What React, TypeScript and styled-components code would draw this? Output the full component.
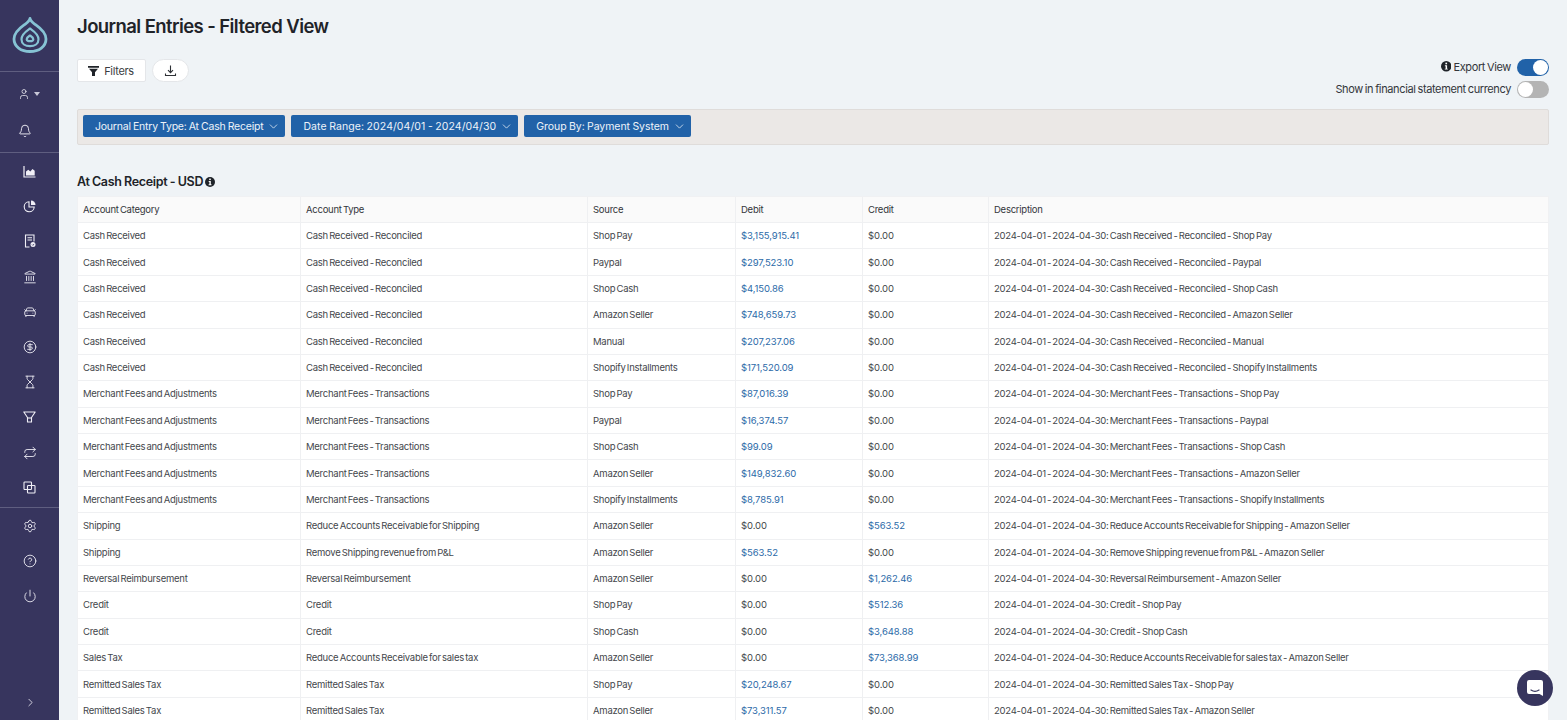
import React from "react";
import styled, { createGlobalStyle } from "styled-components";
import { Bell, Landmark, CarFront, CircleDollarSign, Hourglass, Repeat, Settings, CircleHelp, Power, ChevronRight, ChevronDown, User } from "lucide-react";

const Global = createGlobalStyle`
  html, body { margin: 0; padding: 0; height: 720px; overflow: hidden; background: #eff3f6; }
  body { font-family: Inter, "Liberation Sans", sans-serif; color: #26282c; }
  * { box-sizing: border-box; }
`;
const Page = styled.div`display: flex; width: 1567px; height: 720px; overflow: hidden;`;
const Side = styled.nav`width: 59px; flex: none; height: 720px; background: #37355e; color: #f0eff6; display: flex; flex-direction: column; align-items: center;`;
const LogoBox = styled.div`width: 100%; height: 72px; flex: none; display: flex; align-items: center; justify-content: center; border-bottom: 1px solid #5f5e80; padding-bottom: 1px;`;
const Group = styled.div<{ $h: number; $pt: number; $gap: number; $last?: boolean }>`
  width: 100%; height: ${p => p.$h}px; flex: none; padding-top: ${p => p.$pt}px; display: flex; flex-direction: column; align-items: center; gap: ${p => p.$gap}px;
  border-bottom: ${p => p.$last ? "0" : "1px solid #5f5e80"};
`;
const Ico = styled.span`width: 14px; height: 14px; display: flex; align-items: center; justify-content: center; flex: none;`;
const BellIco = styled(Ico)`margin-left: -10px;`;
const UserRow = styled.span`display: flex; align-items: center; gap: 4px; height: 14px; margin-right: 1px;`;
const Caret = styled.i`width: 0; height: 0; border-left: 3.500px solid transparent; border-right: 3.500px solid transparent; border-top: 4px solid #c9c8d8;`;
const Spacer = styled.div`flex: 1;`;
const Expand = styled.div`height: 27px; flex: none; color: #e5e4ee; margin-left: 1px;`;
const Main = styled.main`flex: 1; min-width: 0; padding: 13px 18px 0 18px;`;
const Title = styled.h1`margin: 0; font-size: 18.5px; line-height: 26px; font-weight: 600; letter-spacing: -0.58px; color: #1f2329;`;
const TopRow = styled.div`display: flex; justify-content: space-between; margin-top: 20px; height: 50px;`;
const BtnRow = styled.div`display: flex; gap: 6px; align-items: flex-start;`;
const FilterBtn = styled.button`width: 69px; height: 23px; border: 1px solid #e4e6e9; border-radius: 2px; background: #fff; display: flex; align-items: center; justify-content: center; gap: 5px; padding: 0 1px 0 0; font: 400 11px Inter, sans-serif; letter-spacing: -0.3px; color: #3a3d42;`;
const RoundBtn = styled.button`width: 37px; height: 23px; border: 1px solid #e4e6e9; border-radius: 12px; background: #fff; display: flex; align-items: center; justify-content: center; padding: 0; color: #2d3035;`;
const Toggles = styled.div`display: flex; flex-direction: column; align-items: flex-end; gap: 5px;`;
const ToggleRow = styled.div`display: flex; align-items: center; gap: 6px; height: 17px; font-size: 11px; letter-spacing: -0.37px; word-spacing: -0.8px; color: #33363b;`;
const ToggleLabel = styled.span`display: flex; align-items: center; gap: 2px; margin-bottom: 2px;`;
const Track = styled.span<{ $on?: boolean }>`width: 32px; height: 17px; border-radius: 9px; background: ${p => p.$on ? "#2162a8" : "#b4b4b4"}; display: flex; align-items: center; justify-content: ${p => p.$on ? "flex-end" : "flex-start"}; padding: 0 1px;`;
const Knob = styled.span`width: 15px; height: 15px; border-radius: 50%; background: #fff;`;
const FilterBar = styled.div`height: 36px; background: #ebe8e6; border: 1px solid #dfdcda; border-radius: 2px; display: flex; align-items: center; gap: 6px; padding: 0 5px 2px;`;
const Pill = styled.div<{ $track: number }>`height: 22px; background: #2162a8; border-radius: 2px; color: #eef3f9; display: flex; align-items: center; gap: 4px; padding: 0 5px 0 12px; font-size: 10.5px; letter-spacing: ${p => p.$track}px; word-spacing: -0.5px;`;
const Section = styled.h2`display: flex; align-items: center; gap: 2px; margin: 28px 0 5px; font-size: 12.5px; line-height: 18px; font-weight: 600; letter-spacing: -0.3px; word-spacing: -0.5px; color: #202328;`;
const Table = styled.div`background: #fff; border: 1px solid #f0f1f3; border-bottom: 0; font-size: 9.5px; letter-spacing: -0.25px; word-spacing: -1.2px; color: #44474c;`;
const Row = styled.div<{ $head?: boolean }>`
  display: grid; grid-template-columns: 222px 287px 148px 127px 126px 1fr; height: ${p => p.$head ? "26px" : "26.39px"};
  background: ${p => p.$head ? "#fafafa" : "#fff"}; border-bottom: 1px solid #eff0f2;
  ${p => p.$head ? "color: #33363b;" : ""}
`;
const Cell = styled.div`display: flex; align-items: center; padding-left: 5px; border-left: 1px solid #eff0f2; white-space: nowrap; &:first-child { border-left: 0; }`;
const Amount = styled.span<{ $blue?: boolean }>`letter-spacing: -0.1px; ${p => p.$blue ? "color: #2c6aa8;" : ""}`;
const Chat = styled.div`position: fixed; left: 1517px; top: 670px; width: 36px; height: 36px; border-radius: 50%; background: #37355e; display: flex; align-items: center; justify-content: center;`;

const Logo = () => (
  <svg width="36" height="36" viewBox="0 0 36 36" fill="none" stroke="#86c3d4" strokeLinejoin="round">
    <path d="M18 1.500c.4 2.600 2 3.700 5.500 6.200 5 3.500 10.500 7.800 10.500 14.300 0 7.500-7 12.500-16 12.500S2 29.500 2 22c0-6.500 5.500-10.800 10.500-14.300 3.500-2.500 5.100-3.600 5.500-6.200z" strokeWidth="2.800" />
    <path d="M18 11.500c3.200 2.300 8.500 5.300 8.500 10.700 0 4.500-3.800 7-8.500 7s-8.500-2.500-8.500-7c0-5.400 5.300-8.400 8.500-10.700z" strokeWidth="2.200" />
    <path d="M18 18.500c1.500 1 3.300 2 3.300 3.700 0 1.400-1.500 2-3.300 2s-3.300-.6-3.300-2c0-1.700 1.800-2.700 3.300-3.700z" strokeWidth="2.200" />
  </svg>
);
const ChartIcon = () => (
  <svg width="13" height="13" viewBox="0 0 13 13"><path d="M1 1v11h11.500" fill="none" stroke="currentColor" strokeWidth="1.200" /><path d="M3 10.500V6.500l2.300-1.800 2 1.800 2.200-2.500 2.200 1.700v4.800z" fill="currentColor" /></svg>
);
const PieIcon = () => (
  <svg width="14" height="14" viewBox="0 0 14 14" fill="none" stroke="currentColor" strokeWidth="1.100"><path d="M6 2.800a5 5 0 1 0 5.200 5.200H6z" /><path d="M8 1.500a4.500 4.500 0 0 1 4.500 4.500H8z" fill="currentColor" stroke="none" /></svg>
);
const DocIcon = () => (
  <svg width="14" height="14" viewBox="0 0 14 14" fill="none" stroke="currentColor" strokeWidth="1.100"><path d="M6.500 13H2.500V1h8.500v6.500" /><path d="M4.500 3.700h4.500M4.500 6h4.500" /><circle cx="10" cy="10.500" r="2.500" fill="currentColor" stroke="none" /><path d="M9 10.500l.9.900 1.200-1.500" stroke="#37355e" strokeWidth=".8" /></svg>
);
const FunnelIcon = () => (
  <svg width="13" height="12" viewBox="0 0 13 12" fill="none" stroke="currentColor" strokeWidth="1.100" strokeLinejoin="round"><path d="M.8 1h11.400L8.500 6.500v4.500h-4V6.500z" /><path d="M4.500 7h4" /></svg>
);
const StackIcon = () => (
  <svg width="13" height="13" viewBox="0 0 13 13" fill="none" stroke="currentColor" strokeWidth="1.100"><rect x="1" y="1" width="7.500" height="7.500" rx=".8" /><rect x="4.500" y="4.500" width="7.500" height="7.500" rx=".8" /></svg>
);
const FunnelSolid = () => (
  <svg width="11" height="10" viewBox="0 0 11 10"><path d="M0 0h11v1.800H0zM1 2.800h9L7 6.200V10H4V6.200z" fill="#1f2329" /></svg>
);
const TrayIcon = () => (
  <svg width="13" height="13" viewBox="0 0 13 13" fill="none" stroke="currentColor" strokeWidth="1.100"><path d="M6.500 1.500v7M4 6.200l2.500 2.500L9 6.200" /><path d="M1.500 9.500v2h10v-2" /></svg>
);
const InfoDot = ({ size = 10 }: { size?: number }) => (
  <svg width={size} height={size} viewBox="0 0 10 10"><circle cx="5" cy="5" r="5" fill="#1f2329" /><rect x="4.200" y="1.600" width="1.600" height="1.500" fill="#fff" /><path d="M3.700 4h2.100v3.300h.7v.9H3.600v-.9h.8V4.900h-.7z" fill="#fff" /></svg>
);

type R = [string, string, string, string, string];
const CR = "Cash Received", CRR = "Cash Received - Reconciled", MF = "Merchant Fees and Adjustments", MT = "Merchant Fees - Transactions";
const rows: R[] = [
  [CR, CRR, "Shop Pay", "$3,155,915.41", "$0.00"],
  [CR, CRR, "Paypal", "$297,523.10", "$0.00"],
  [CR, CRR, "Shop Cash", "$4,150.86", "$0.00"],
  [CR, CRR, "Amazon Seller", "$748,659.73", "$0.00"],
  [CR, CRR, "Manual", "$207,237.06", "$0.00"],
  [CR, CRR, "Shopify Installments", "$171,520.09", "$0.00"],
  [MF, MT, "Shop Pay", "$87,016.39", "$0.00"],
  [MF, MT, "Paypal", "$16,374.57", "$0.00"],
  [MF, MT, "Shop Cash", "$99.09", "$0.00"],
  [MF, MT, "Amazon Seller", "$149,832.60", "$0.00"],
  [MF, MT, "Shopify Installments", "$8,785.91", "$0.00"],
  ["Shipping", "Reduce Accounts Receivable for Shipping", "Amazon Seller", "$0.00", "$563.52"],
  ["Shipping", "Remove Shipping revenue from P&L", "Amazon Seller", "$563.52", "$0.00"],
  ["Reversal Reimbursement", "Reversal Reimbursement", "Amazon Seller", "$0.00", "$1,262.46"],
  ["Credit", "Credit", "Shop Pay", "$0.00", "$512.36"],
  ["Credit", "Credit", "Shop Cash", "$0.00", "$3,648.88"],
  ["Sales Tax", "Reduce Accounts Receivable for sales tax", "Amazon Seller", "$0.00", "$73,368.99"],
  ["Remitted Sales Tax", "Remitted Sales Tax", "Shop Pay", "$20,248.67", "$0.00"],
  ["Remitted Sales Tax", "Remitted Sales Tax", "Amazon Seller", "$73,311.57", "$0.00"],
];
const Money = ({ v }: { v: string }) => <Amount $blue={v !== "$0.00"}>{v}</Amount>;
const icon = { size: 14, strokeWidth: 1.5 };

export default function App() {
  return (
    <Page>
      <Global />
      <Side>
        <LogoBox><Logo /></LogoBox>
        <Group $h={81} $pt={15} $gap={23}>
          <UserRow><User size={12} strokeWidth={1.5} /><Caret /></UserRow>
          <BellIco><Bell size={14} strokeWidth={1.6} /></BellIco>
        </Group>
        <Group $h={355} $pt={11} $gap={21.2}>
          <Ico><ChartIcon /></Ico>
          <Ico><PieIcon /></Ico>
          <Ico><DocIcon /></Ico>
          <Ico><Landmark {...icon} /></Ico>
          <Ico><CarFront {...icon} /></Ico>
          <Ico><CircleDollarSign {...icon} /></Ico>
          <Ico><Hourglass {...icon} /></Ico>
          <Ico><FunnelIcon /></Ico>
          <Ico><Repeat {...icon} /></Ico>
          <Ico><StackIcon /></Ico>
        </Group>
        <Group $h={110} $pt={11} $gap={21} $last>
          <Ico><Settings {...icon} /></Ico>
          <Ico><CircleHelp {...icon} /></Ico>
          <Ico><Power {...icon} /></Ico>
        </Group>
        <Spacer />
        <Expand><ChevronRight size={13} strokeWidth={1.6} /></Expand>
      </Side>
      <Main>
        <Title>Journal Entries - Filtered View</Title>
        <TopRow>
          <BtnRow>
            <FilterBtn><FunnelSolid />Filters</FilterBtn>
            <RoundBtn><TrayIcon /></RoundBtn>
          </BtnRow>
          <Toggles>
            <ToggleRow>
              <ToggleLabel><InfoDot size={10.5} />Export View</ToggleLabel>
              <Track $on><Knob /></Track>
            </ToggleRow>
            <ToggleRow>
              <ToggleLabel>Show in financial statement currency</ToggleLabel>
              <Track><Knob /></Track>
            </ToggleRow>
          </Toggles>
        </TopRow>
        <FilterBar>
          <Pill $track={-0.22}>Journal Entry Type: At Cash Receipt<ChevronDown size={13} strokeWidth={1.4} /></Pill>
          <Pill $track={0.08}>Date Range: 2024/04/01 - 2024/04/30<ChevronDown size={13} strokeWidth={1.4} /></Pill>
          <Pill $track={-0.05}>Group By: Payment System<ChevronDown size={13} strokeWidth={1.4} /></Pill>
        </FilterBar>
        <Section>At Cash Receipt - USD <InfoDot /></Section>
        <Table>
          <Row $head>
            {["Account Category", "Account Type", "Source", "Debit", "Credit", "Description"].map(h => <Cell key={h}>{h}</Cell>)}
          </Row>
          {rows.map((r, i) => (
            <Row key={i}>
              <Cell>{r[0]}</Cell>
              <Cell>{r[1]}</Cell>
              <Cell>{r[2]}</Cell>
              <Cell><Money v={r[3]} /></Cell>
              <Cell><Money v={r[4]} /></Cell>
              <Cell>{`2024-04-01 - 2024-04-30: ${r[1]} - ${r[2]}`}</Cell>
            </Row>
          ))}
        </Table>
      </Main>
      <Chat>
        <svg width="18" height="18" viewBox="0 0 18 18"><path d="M3 1h12a2 2 0 0 1 2 2v14l-3.500-2H3a2 2 0 0 1-2-2V3a2 2 0 0 1 2-2z" fill="#fff" /><path d="M5 11c2.500 1.600 5.500 1.600 8 0" stroke="#37355e" strokeWidth="1.200" fill="none" strokeLinecap="round" /></svg>
      </Chat>
    </Page>
  );
}
